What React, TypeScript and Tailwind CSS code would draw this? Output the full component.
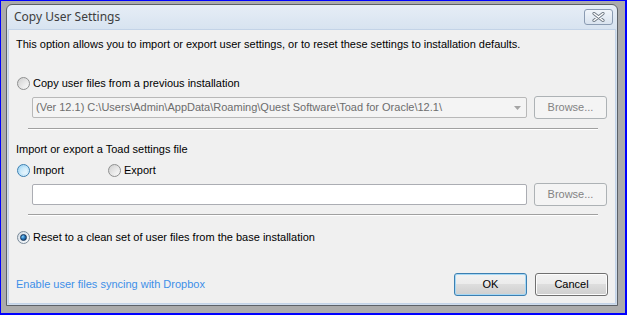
import React from "react";

type RadioKind = "normal" | "hover" | "checked";

function Radio({ kind }: { kind: RadioKind }) {
  if (kind === "checked") {
    return (
      <span className="relative inline-block w-[13px] h-[13px] rounded-full border border-[#7a8a99] bg-[linear-gradient(135deg,#d6dde5,#f8fbfd)] shrink-0">
        <span className="absolute left-[2px] top-[2px] w-[7px] h-[7px] rounded-full bg-[radial-gradient(circle_at_35%_35%,#8fd2f6_0%,#2a7fc6_40%,#0b2e5a_100%)] border border-[#16365a]" />
      </span>
    );
  }
  if (kind === "hover") {
    return (
      <span className="relative inline-block w-[13px] h-[13px] rounded-full border border-[#3c7fb1] bg-[linear-gradient(135deg,#9fd6f5,#e6f5fd)] shrink-0">
        <span className="absolute left-[2px] top-[2px] w-[7px] h-[7px] rounded-full bg-[linear-gradient(135deg,#b9e2f8,#f1f9fe)]" />
      </span>
    );
  }
  return (
    <span className="relative inline-block w-[13px] h-[13px] rounded-full border border-[#8e8f8f] bg-[linear-gradient(135deg,#cfcfcf,#fbfbfb)] shrink-0">
      <span className="absolute left-[2px] top-[2px] w-[7px] h-[7px] rounded-full bg-[linear-gradient(135deg,#d8d8d8,#f6f6f6)]" />
    </span>
  );
}

function DisabledButton({ label }: { label: string }) {
  return (
    <div className="w-[73px] h-[23px] rounded-[3px] border border-[#adb2b5] bg-[#f4f4f4] text-[#838383] flex items-center justify-center">
      {label}
    </div>
  );
}

export default function App() {
  return (
    <div
      className="w-[627px] h-[315px] bg-[#ababab] border-t border-l border-r-2 border-b-2 border-[#0000ff] pl-[5px] pt-[3px] overflow-hidden text-[11px] leading-[13px] text-black"
      style={{ fontFamily: '"Liberation Sans", Arial, sans-serif' }}
    >
      <div className="w-[612px] h-[302px] border border-[#5c6167] rounded-t-[6px] bg-[linear-gradient(#e6edf6,#d4e1ef_30px,#cfdcec)] flex flex-col">
        {/* Title bar */}
        <div className="h-[24px] flex items-start shrink-0">
          <div className="pl-[7px] pt-[5px] text-[12px] leading-[14px] text-[#3e3e3e] flex-1" style={{ fontFamily: '"Noto Sans", "Liberation Sans", sans-serif' }}>
            Copy User Settings
          </div>
          <div className="mt-[4px] mr-[4px] w-[29px] h-[16px] rounded-[3px] border border-[#8a9bb2] bg-[linear-gradient(#f1f5fa,#d9e3ef)] flex items-center justify-center">
            <svg width="13" height="10" viewBox="0 0 13 10">
              <path d="M2 1.5 L11 8.5 M11 1.5 L2 8.5" stroke="#6f7a86" strokeWidth="3.2" strokeLinecap="round" />
              <path d="M2 1.5 L11 8.5 M11 1.5 L2 8.5" stroke="#ffffff" strokeWidth="1.4" strokeLinecap="round" />
            </svg>
          </div>
        </div>
        {/* Client area */}
        <div className="flex-1 mx-[1px] mb-[1px] border border-[#c3d3e7] bg-[#f0f0f0] pl-[7px] flex flex-col">
          <div className="mt-[8px] h-[13px]">
            This option allows you to import or export user settings, or to reset these settings to installation defaults.
          </div>

          <div className="mt-[26px] h-[13px] flex items-center gap-[3px] ml-[1px]">
            <Radio kind="normal" />
            <span>Copy user files from a previous installation</span>
          </div>

          <div className="mt-[6px] h-[23px] flex items-center ml-[16px]">
            <div className="w-[495px] h-[21px] border border-[#b8b8b8] rounded-[2px] bg-[#f4f4f4] text-[#6d6d6d] flex items-center pl-[3px] pr-[4px]">
              <span className="flex-1 whitespace-nowrap overflow-hidden">
                (Ver 12.1) C:\Users\Admin\AppData\Roaming\Quest Software\Toad for Oracle\12.1\
              </span>
              <svg width="7" height="4" viewBox="0 0 7 4" className="mr-[1px]">
                <path d="M0 0 H7 L3.5 4 Z" fill="#a5a5a5" />
              </svg>
            </div>
            <div className="ml-[7px]">
              <DisabledButton label="Browse..." />
            </div>
          </div>

          <div className="mt-[9px] ml-[12px] w-[570px] h-[2px] border-t border-[#a0a0a0] border-b border-b-white" />

          <div className="mt-[13px] h-[13px]">Import or export a Toad settings file</div>

          <div className="mt-[8px] h-[13px] flex items-center ml-[1px]">
            <div className="w-[91px] flex items-center gap-[3px]">
              <Radio kind="hover" />
              <span>Import</span>
            </div>
            <div className="flex items-center gap-[3px]">
              <Radio kind="normal" />
              <span>Export</span>
            </div>
          </div>

          <div className="mt-[6px] h-[23px] flex items-center ml-[16px]">
            <div className="w-[495px] h-[21px] border border-[#abadb3] rounded-[2px] bg-white" />
            <div className="ml-[7px]">
              <DisabledButton label="Browse..." />
            </div>
          </div>

          <div className="mt-[8px] ml-[12px] w-[570px] h-[2px] border-t border-[#a0a0a0] border-b border-b-white" />

          <div className="mt-[15px] h-[13px] flex items-center gap-[3px] ml-[1px]">
            <Radio kind="checked" />
            <span>Reset to a clean set of user files from the base installation</span>
          </div>

          <div className="mt-[29px] h-[23px] flex items-center">
            <span className="flex-1 text-[#3d8fe8]">Enable user files syncing with Dropbox</span>
            <div className="w-[73px] h-[23px] rounded-[3px] border border-[#3c7fb1] bg-[linear-gradient(#f2f2f2_0%,#ebebeb_50%,#dddddd_50%,#cfcfcf_100%)] shadow-[inset_0_0_0_1px_#a6d8f5] flex items-center justify-center">
              OK
            </div>
            <div className="ml-[8px] mr-[7px] w-[73px] h-[23px] rounded-[3px] border border-[#707070] bg-[linear-gradient(#f2f2f2_0%,#ebebeb_50%,#dddddd_50%,#cfcfcf_100%)] shadow-[inset_0_0_0_1px_#fcfcfc] flex items-center justify-center">
              Cancel
            </div>
          </div>
        </div>
      </div>
    </div>
  );
}
